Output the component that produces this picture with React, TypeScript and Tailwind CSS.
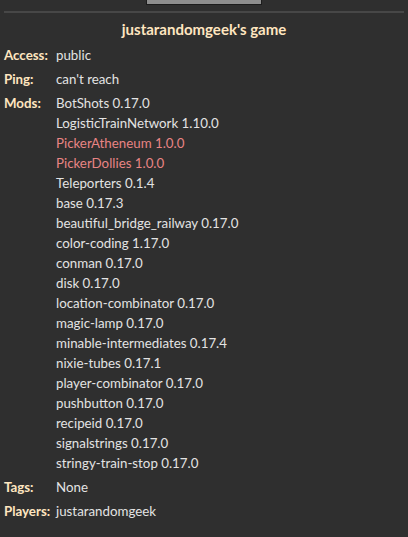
const MODS: { name: string; bad?: boolean }[] = [
  { name: 'BotShots 0.17.0' },
  { name: 'LogisticTrainNetwork 1.10.0' },
  { name: 'PickerAtheneum 1.0.0', bad: true },
  { name: 'PickerDollies 1.0.0', bad: true },
  { name: 'Teleporters 0.1.4' },
  { name: 'base 0.17.3' },
  { name: 'beautiful_bridge_railway 0.17.0' },
  { name: 'color-coding 1.17.0' },
  { name: 'conman 0.17.0' },
  { name: 'disk 0.17.0' },
  { name: 'location-combinator 0.17.0' },
  { name: 'magic-lamp 0.17.0' },
  { name: 'minable-intermediates 0.17.4' },
  { name: 'nixie-tubes 0.17.1' },
  { name: 'player-combinator 0.17.0' },
  { name: 'pushbutton 0.17.0' },
  { name: 'recipeid 0.17.0' },
  { name: 'signalstrings 0.17.0' },
  { name: 'stringy-train-stop 0.17.0' },
];

function Row({ label, children }: { label: string; children: React.ReactNode }) {
  return (
    <div className="mt-1 flex">
      <span className="w-[52px] shrink-0 font-bold text-[#ffe6c0]">{label}</span>
      <div className="text-[#e3e3e3]">{children}</div>
    </div>
  );
}

export default function App() {
  return (
    <div className="h-[537px] w-[408px] overflow-hidden bg-[#2f2f2f] text-[13.3px] leading-[20px] font-['Lato','Noto_Sans',sans-serif]">
      {/* button stub at top */}
      <div className="flex justify-center">
        <div className="h-[5px] w-[116px] border-x border-b border-[#1c1c1c] bg-[#8e8e8e]" />
      </div>

      <div className="mx-1 mt-[6px] h-[2px] bg-[#474747]" />

      <h1 className="mt-[6px] text-center text-[15px] font-bold text-[#ffe6c0]">justarandomgeek's game</h1>

      <div className="mt-[6px] px-1">
        <Row label="Access:">public</Row>
        <Row label="Ping:">can't reach</Row>
        <Row label="Mods:">
          {MODS.map((m) => (
            <div key={m.name} className={m.bad ? 'text-[#e88484]' : ''}>{m.name}</div>
          ))}
        </Row>
        <Row label="Tags:">None</Row>
        <Row label="Players:">justarandomgeek</Row>
      </div>
    </div>
  );
}
